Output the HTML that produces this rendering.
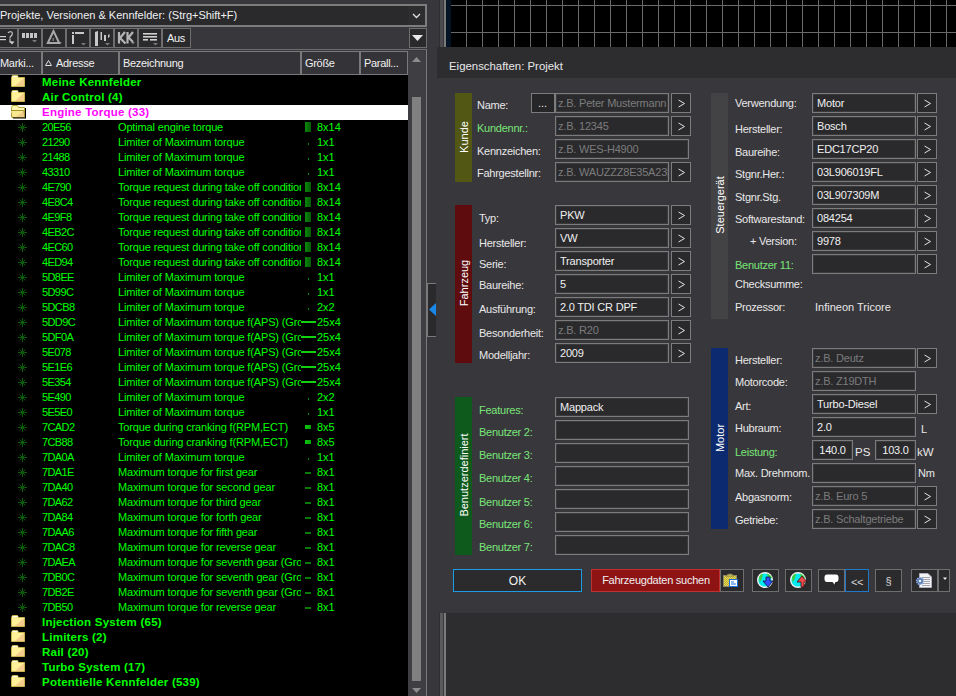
<!DOCTYPE html>
<html><head><meta charset="utf-8">
<style>
*{margin:0;padding:0;box-sizing:border-box}
html,body{width:956px;height:696px;overflow:hidden;background:#38373c;font-family:"Liberation Sans",sans-serif;}
.abs{position:absolute}
#combo{position:absolute;left:-2px;top:4px;width:429px;height:23px;border:2px solid #7c7c7c;background:#2a2a2d;}
#combo .txt{position:absolute;left:0px;top:3px;font-size:11px;color:#f0f0f0;white-space:nowrap;letter-spacing:0px}
#combo .dd{position:absolute;right:0;top:0;width:17px;height:19px;background:#2d2d30}
.tb{position:absolute;top:28px;height:20px;border:1px solid #6e6e6e;background:#2a2a2d}
.hdr{position:absolute;top:51px;height:24px;border:1px solid #7a7a7a;background:#343438;font-size:11px;color:#f0f0f0;white-space:nowrap;overflow:hidden}
.hdr span{position:absolute;left:3px;top:5px;letter-spacing:-0.3px}
#list{position:absolute;left:0;top:75px;width:408px;height:621px;background:#000;overflow:hidden}
.row{position:absolute;left:0;width:408px;height:15px;font-size:11px;color:#00ff00;white-space:nowrap}
.row.hl{background:#fff}
.row.hl .fname{color:#ff00ff}
.ficon{position:absolute;left:11px;top:0px;width:16px;height:15px}
.ficon svg{display:block}
.fname{position:absolute;left:42px;top:0px;font-weight:bold;font-size:11.5px;line-height:15px;color:#00ff00;letter-spacing:0.23px}
.sicon{position:absolute;left:17px;top:2px;width:11px;height:11px}
.sicon svg{display:block}
.addr{position:absolute;left:42px;top:0;line-height:15px;letter-spacing:-0.6px}
.desc{position:absolute;left:118px;top:0;width:183px;overflow:hidden;line-height:15px;letter-spacing:-0.15px}
.size{position:absolute;left:317px;top:0;line-height:15px}
.ind{position:absolute}
.ind.rect{left:305px;top:2px;width:6px;height:10px;background:linear-gradient(90deg,#0a8a0a,#067006 50%,#0b5a0b)}
.ind.rect5{left:305px;top:5px;width:6px;height:4px;background:linear-gradient(90deg,#0ac80a,#08a008)}
.ind.dot{left:308px;top:8px;width:1px;height:2px;background:#0a8a0a}
.ind.line{left:301px;top:6px;width:15px;height:2px;background:#10d010}
.ind.hline{left:305px;top:7px;width:6px;height:2px;background:#0a7a0a}
#sb{position:absolute;left:408px;top:51px;width:18px;height:645px;background:#3f3e43}
#sbline{position:absolute;left:426px;top:49px;width:1px;height:647px;background:#7a7a7a}
#topline{position:absolute;left:0;top:49px;width:427px;height:1px;background:#6e6e6e}
#grid{position:absolute;left:440px;top:0;width:516px;height:47px;background:#000}
#dlg{position:absolute;left:437px;top:47px;width:519px;height:566px;background:#38373c}
#dlgtitle{position:absolute;left:0;top:0;width:519px;height:31px;background:#2d2d30}
#dlgtitle span{position:absolute;left:12px;top:13px;font-size:11.4px;color:#e8e8e8;white-space:nowrap}
#lower{position:absolute;left:446px;top:613px;width:510px;height:83px;background:#2d2d30}
.bar{position:absolute;width:17px}
.bar span{position:absolute;left:50%;top:calc(50% - 1px);transform:translate(-50%,-50%) rotate(-90deg);color:#fff;font-size:11px;white-space:nowrap}
.lbl{position:absolute;font-size:11px;color:#e8e8e8;white-space:nowrap;letter-spacing:-0.25px}
.lbl.g{color:#78e678}
.inp{position:absolute;height:20px;border:1px solid #7c7c7c;box-shadow:inset 0 0 0 1px #3a3a3d;background:#2a2a2d;font-size:11px;color:#f0f0f0;white-space:nowrap;overflow:hidden;letter-spacing:-0.2px}
.inp span{position:absolute;left:4px;top:3px}
.inp.ph span{color:#7c7c7c;left:2px}
.inp[style*="center"] span{position:static;display:block;padding-top:3px}
.btn{position:absolute;height:20px;border:1px solid #7c7c7c;background:#2a2a2d;color:#e0e0e0;font-size:11px;text-align:center;line-height:18px}
.fb{position:absolute;top:569px;height:23px;border:1px solid #6e6e6e;background:#2b2b2e}
</style></head><body>
<!-- left panel -->
<div id="combo"><span class="txt">Projekte, Versionen &amp; Kennfelder: (Strg+Shift+F)</span><div class="dd"><svg width="17" height="19" viewBox="0 0 17 19"><path d="M5 8 L8.5 11.5 L12 8" fill="none" stroke="#e0e0e0" stroke-width="1.3"/></svg></div></div>

<div class="tb" style="left:-6px;width:24px"></div>
<div class="tb" style="left:18px;width:24px"></div>
<div class="tb" style="left:42px;width:24px"></div>
<div class="tb" style="left:66px;width:24px"></div>
<div class="tb" style="left:90px;width:24px"></div>
<div class="tb" style="left:114px;width:24px"></div>
<div class="tb" style="left:138px;width:24px"></div>
<svg width="170" height="20" viewBox="0 0 170 20" style="position:absolute;left:0;top:28px">
 <g fill="#cfcfcf">
  <rect x="0" y="8" width="6" height="1.2"/><rect x="0" y="11" width="6" height="1.2"/>
  <path d="M8 5 Q9 3.5 11 3.8 Q13 4.5 12 7 Q10.5 8.5 10 9.5 V10.5" fill="none" stroke="#cfcfcf" stroke-width="1.1"/>
  <path d="M10 11 V14 H12" fill="none" stroke="#cfcfcf" stroke-width="1.1"/>
  <path d="M9.5 13.5 H14.5 L12 16.5 Z"/>
 </g>
 <g fill="#c4c4c4">
  <rect x="22" y="5" width="3" height="5"/><rect x="26" y="5" width="3" height="5"/><rect x="30" y="5" width="3" height="5"/><rect x="34" y="5" width="3" height="5"/>
 </g>
 <g fill="#7a7a7a">
  <path d="M32 12 H37 L34.5 14.5 Z"/>
  <path d="M57 14 H62 L59.5 16.5 Z"/>
  <path d="M81 15 H86 L83.5 17.5 Z"/>
  <path d="M105 15 H110 L107.5 17.5 Z"/>
  <path d="M131 14 H135 L133 16.5 Z"/>
  <path d="M153 15 H158 L155.5 17.5 Z"/>
 </g>
 <path d="M53.5 3 L47.8 15 H59.2 Z" fill="none" stroke="#a8a8a8" stroke-width="2"/>
 <rect x="52.5" y="10" width="1.5" height="3" fill="#777"/>
 <g fill="#c8c8c8">
  <rect x="72" y="4" width="2" height="2"/><rect x="72" y="7" width="2" height="9"/><rect x="75" y="4" width="9" height="2"/>
  <path d="M95 4 L98 3 V18 H95 Z"/><rect x="100.5" y="4" width="1.5" height="8"/><rect x="104" y="7" width="2" height="6"/><path d="M108 7 L109.5 6 V9 L108 10 Z"/>
 </g>
 <g fill="none" stroke="#b4b4b4" stroke-width="2.2"><path d="M119 4 V15.5 M125 4 L120 10 L125.5 15.5 M127.5 4 V15.5 M133 4 L128.5 9.5 L133 14"/></g>
 <g fill="#d0d0d0">
  <rect x="143" y="5" width="14" height="1.6"/><rect x="143" y="8" width="14" height="1.6"/><rect x="143" y="11" width="5" height="1.6"/><rect x="150" y="11" width="7" height="1.6"/>
 </g>
</svg>
<div class="tb" style="left:162px;width:29px"><span style="position:absolute;left:4px;top:3px;font-size:11px;letter-spacing:-0.4px;color:#f0f0f0">Aus</span></div>
<div class="tb" style="left:409px;width:18px;height:20px"><svg width="16" height="18" viewBox="0 0 16 18" style="position:absolute;left:0;top:0"><path d="M2 6 H13 L7.5 12 Z" fill="#e8e8e8"/></svg></div>
<div id="topline"></div>

<div class="hdr" style="left:-1px;width:43px"><span style="left:0px;letter-spacing:-0.3px">Marki...</span></div>
<div class="hdr" style="left:42px;width:77px"><svg width="8" height="6" style="position:absolute;left:2px;top:8px"><path d="M0.5 5.5 H6.5 L3.5 0.5 Z" fill="none" stroke="#e0e0e0" stroke-width="1"/></svg><span style="left:13px">Adresse</span></div>
<div class="hdr" style="left:119px;width:182px"><span>Bezeichnung</span></div>
<div class="hdr" style="left:301px;width:59px"><span>Größe</span></div>
<div class="hdr" style="left:360px;width:48px"><span>Parall...</span></div>

<div id="list">
</div>
<div style="position:absolute;left:0;top:0">
<div class="row" style="top:75px"><span class="ficon"><svg class="fold" width="16" height="14" viewBox="0 0 16 14"><path d="M0.5 2.5 L1.5 0.5 H6.5 L7.5 2.5 H13.5 V11.5 H0.5 Z" fill="#fff09a" stroke="#c8b44a" stroke-width="1"/><path d="M4 11 L13 3 V11 Z" fill="#f0c088" opacity="0.75"/><rect x="1.5" y="1" width="5" height="1" fill="#ffffff"/></svg></span><span class="fname">Meine Kennfelder</span></div>
<div class="row" style="top:90px"><span class="ficon"><svg class="fold" width="16" height="14" viewBox="0 0 16 14"><path d="M0.5 2.5 L1.5 0.5 H6.5 L7.5 2.5 H13.5 V11.5 H0.5 Z" fill="#fff09a" stroke="#c8b44a" stroke-width="1"/><path d="M4 11 L13 3 V11 Z" fill="#f0c088" opacity="0.75"/><rect x="1.5" y="1" width="5" height="1" fill="#ffffff"/></svg></span><span class="fname">Air Control (4)</span></div>
<div class="row hl" style="top:105px"><span class="ficon"><svg class="fold" width="16" height="14" viewBox="0 0 16 14"><path d="M0.5 12 V2.5 L1.5 0.5 H6.5 L7.5 2.5 H13.5 V12" fill="#fff6b0" stroke="#b8a840" stroke-width="1"/><path d="M-0.5 5.5 H12.5 L14 12.5 H1 Z" fill="#f8e890" stroke="#a09030" stroke-width="1"/><path d="M5 12 L13 6 V12 Z" fill="#f0b888" opacity="0.6"/><path d="M13.5 3 H15 V13.5 H2 V12.5 H14 V3 Z" fill="#000"/></svg></span><span class="fname">Engine Torque (33)</span></div>
<div class="row" style="top:120px"><span class="sicon"><svg class="star" width="11" height="11" viewBox="0 0 11 11"><g stroke="#0a5c0a" stroke-width="1"><line x1="5.5" y1="1" x2="5.5" y2="10"/><line x1="1" y1="5.5" x2="10" y2="5.5"/><line x1="2.6" y1="2.6" x2="8.4" y2="8.4"/><line x1="8.4" y1="2.6" x2="2.6" y2="8.4"/></g><rect x="4" y="4" width="3" height="3" fill="#0a5c0a"/></svg></span><span class="addr">20E56</span><span class="desc">Optimal engine torque</span><span class="ind rect"></span><span class="size">8x14</span></div>
<div class="row" style="top:135px"><span class="sicon"><svg class="star" width="11" height="11" viewBox="0 0 11 11"><g stroke="#0a5c0a" stroke-width="1"><line x1="5.5" y1="1" x2="5.5" y2="10"/><line x1="1" y1="5.5" x2="10" y2="5.5"/><line x1="2.6" y1="2.6" x2="8.4" y2="8.4"/><line x1="8.4" y1="2.6" x2="2.6" y2="8.4"/></g><rect x="4" y="4" width="3" height="3" fill="#0a5c0a"/></svg></span><span class="addr">21290</span><span class="desc">Limiter of Maximum torque</span><span class="ind dot"></span><span class="size">1x1</span></div>
<div class="row" style="top:150px"><span class="sicon"><svg class="star" width="11" height="11" viewBox="0 0 11 11"><g stroke="#0a5c0a" stroke-width="1"><line x1="5.5" y1="1" x2="5.5" y2="10"/><line x1="1" y1="5.5" x2="10" y2="5.5"/><line x1="2.6" y1="2.6" x2="8.4" y2="8.4"/><line x1="8.4" y1="2.6" x2="2.6" y2="8.4"/></g><rect x="4" y="4" width="3" height="3" fill="#0a5c0a"/></svg></span><span class="addr">21488</span><span class="desc">Limiter of Maximum torque</span><span class="ind dot"></span><span class="size">1x1</span></div>
<div class="row" style="top:165px"><span class="sicon"><svg class="star" width="11" height="11" viewBox="0 0 11 11"><g stroke="#0a5c0a" stroke-width="1"><line x1="5.5" y1="1" x2="5.5" y2="10"/><line x1="1" y1="5.5" x2="10" y2="5.5"/><line x1="2.6" y1="2.6" x2="8.4" y2="8.4"/><line x1="8.4" y1="2.6" x2="2.6" y2="8.4"/></g><rect x="4" y="4" width="3" height="3" fill="#0a5c0a"/></svg></span><span class="addr">43310</span><span class="desc">Limiter of Maximum torque</span><span class="ind dot"></span><span class="size">1x1</span></div>
<div class="row" style="top:180px"><span class="sicon"><svg class="star" width="11" height="11" viewBox="0 0 11 11"><g stroke="#0a5c0a" stroke-width="1"><line x1="5.5" y1="1" x2="5.5" y2="10"/><line x1="1" y1="5.5" x2="10" y2="5.5"/><line x1="2.6" y1="2.6" x2="8.4" y2="8.4"/><line x1="8.4" y1="2.6" x2="2.6" y2="8.4"/></g><rect x="4" y="4" width="3" height="3" fill="#0a5c0a"/></svg></span><span class="addr">4E790</span><span class="desc">Torque request during take off conditions</span><span class="ind rect"></span><span class="size">8x14</span></div>
<div class="row" style="top:195px"><span class="sicon"><svg class="star" width="11" height="11" viewBox="0 0 11 11"><g stroke="#0a5c0a" stroke-width="1"><line x1="5.5" y1="1" x2="5.5" y2="10"/><line x1="1" y1="5.5" x2="10" y2="5.5"/><line x1="2.6" y1="2.6" x2="8.4" y2="8.4"/><line x1="8.4" y1="2.6" x2="2.6" y2="8.4"/></g><rect x="4" y="4" width="3" height="3" fill="#0a5c0a"/></svg></span><span class="addr">4E8C4</span><span class="desc">Torque request during take off conditions</span><span class="ind rect"></span><span class="size">8x14</span></div>
<div class="row" style="top:210px"><span class="sicon"><svg class="star" width="11" height="11" viewBox="0 0 11 11"><g stroke="#0a5c0a" stroke-width="1"><line x1="5.5" y1="1" x2="5.5" y2="10"/><line x1="1" y1="5.5" x2="10" y2="5.5"/><line x1="2.6" y1="2.6" x2="8.4" y2="8.4"/><line x1="8.4" y1="2.6" x2="2.6" y2="8.4"/></g><rect x="4" y="4" width="3" height="3" fill="#0a5c0a"/></svg></span><span class="addr">4E9F8</span><span class="desc">Torque request during take off conditions</span><span class="ind rect"></span><span class="size">8x14</span></div>
<div class="row" style="top:225px"><span class="sicon"><svg class="star" width="11" height="11" viewBox="0 0 11 11"><g stroke="#0a5c0a" stroke-width="1"><line x1="5.5" y1="1" x2="5.5" y2="10"/><line x1="1" y1="5.5" x2="10" y2="5.5"/><line x1="2.6" y1="2.6" x2="8.4" y2="8.4"/><line x1="8.4" y1="2.6" x2="2.6" y2="8.4"/></g><rect x="4" y="4" width="3" height="3" fill="#0a5c0a"/></svg></span><span class="addr">4EB2C</span><span class="desc">Torque request during take off conditions</span><span class="ind rect"></span><span class="size">8x14</span></div>
<div class="row" style="top:240px"><span class="sicon"><svg class="star" width="11" height="11" viewBox="0 0 11 11"><g stroke="#0a5c0a" stroke-width="1"><line x1="5.5" y1="1" x2="5.5" y2="10"/><line x1="1" y1="5.5" x2="10" y2="5.5"/><line x1="2.6" y1="2.6" x2="8.4" y2="8.4"/><line x1="8.4" y1="2.6" x2="2.6" y2="8.4"/></g><rect x="4" y="4" width="3" height="3" fill="#0a5c0a"/></svg></span><span class="addr">4EC60</span><span class="desc">Torque request during take off conditions</span><span class="ind rect"></span><span class="size">8x14</span></div>
<div class="row" style="top:255px"><span class="sicon"><svg class="star" width="11" height="11" viewBox="0 0 11 11"><g stroke="#0a5c0a" stroke-width="1"><line x1="5.5" y1="1" x2="5.5" y2="10"/><line x1="1" y1="5.5" x2="10" y2="5.5"/><line x1="2.6" y1="2.6" x2="8.4" y2="8.4"/><line x1="8.4" y1="2.6" x2="2.6" y2="8.4"/></g><rect x="4" y="4" width="3" height="3" fill="#0a5c0a"/></svg></span><span class="addr">4ED94</span><span class="desc">Torque request during take off conditions</span><span class="ind rect"></span><span class="size">8x14</span></div>
<div class="row" style="top:270px"><span class="sicon"><svg class="star" width="11" height="11" viewBox="0 0 11 11"><g stroke="#0a5c0a" stroke-width="1"><line x1="5.5" y1="1" x2="5.5" y2="10"/><line x1="1" y1="5.5" x2="10" y2="5.5"/><line x1="2.6" y1="2.6" x2="8.4" y2="8.4"/><line x1="8.4" y1="2.6" x2="2.6" y2="8.4"/></g><rect x="4" y="4" width="3" height="3" fill="#0a5c0a"/></svg></span><span class="addr">5D8EE</span><span class="desc">Limiter of Maximum torque</span><span class="ind dot"></span><span class="size">1x1</span></div>
<div class="row" style="top:285px"><span class="sicon"><svg class="star" width="11" height="11" viewBox="0 0 11 11"><g stroke="#0a5c0a" stroke-width="1"><line x1="5.5" y1="1" x2="5.5" y2="10"/><line x1="1" y1="5.5" x2="10" y2="5.5"/><line x1="2.6" y1="2.6" x2="8.4" y2="8.4"/><line x1="8.4" y1="2.6" x2="2.6" y2="8.4"/></g><rect x="4" y="4" width="3" height="3" fill="#0a5c0a"/></svg></span><span class="addr">5D99C</span><span class="desc">Limiter of Maximum torque</span><span class="ind dot"></span><span class="size">1x1</span></div>
<div class="row" style="top:300px"><span class="sicon"><svg class="star" width="11" height="11" viewBox="0 0 11 11"><g stroke="#0a5c0a" stroke-width="1"><line x1="5.5" y1="1" x2="5.5" y2="10"/><line x1="1" y1="5.5" x2="10" y2="5.5"/><line x1="2.6" y1="2.6" x2="8.4" y2="8.4"/><line x1="8.4" y1="2.6" x2="2.6" y2="8.4"/></g><rect x="4" y="4" width="3" height="3" fill="#0a5c0a"/></svg></span><span class="addr">5DCB8</span><span class="desc">Limiter of Maximum torque</span><span class="ind dot"></span><span class="size">2x2</span></div>
<div class="row" style="top:315px"><span class="sicon"><svg class="star" width="11" height="11" viewBox="0 0 11 11"><g stroke="#0a5c0a" stroke-width="1"><line x1="5.5" y1="1" x2="5.5" y2="10"/><line x1="1" y1="5.5" x2="10" y2="5.5"/><line x1="2.6" y1="2.6" x2="8.4" y2="8.4"/><line x1="8.4" y1="2.6" x2="2.6" y2="8.4"/></g><rect x="4" y="4" width="3" height="3" fill="#0a5c0a"/></svg></span><span class="addr">5DD9C</span><span class="desc">Limiter of Maximum torque f(APS) (Gro</span><span class="ind line"></span><span class="size">25x4</span></div>
<div class="row" style="top:330px"><span class="sicon"><svg class="star" width="11" height="11" viewBox="0 0 11 11"><g stroke="#0a5c0a" stroke-width="1"><line x1="5.5" y1="1" x2="5.5" y2="10"/><line x1="1" y1="5.5" x2="10" y2="5.5"/><line x1="2.6" y1="2.6" x2="8.4" y2="8.4"/><line x1="8.4" y1="2.6" x2="2.6" y2="8.4"/></g><rect x="4" y="4" width="3" height="3" fill="#0a5c0a"/></svg></span><span class="addr">5DF0A</span><span class="desc">Limiter of Maximum torque f(APS) (Gro</span><span class="ind line"></span><span class="size">25x4</span></div>
<div class="row" style="top:345px"><span class="sicon"><svg class="star" width="11" height="11" viewBox="0 0 11 11"><g stroke="#0a5c0a" stroke-width="1"><line x1="5.5" y1="1" x2="5.5" y2="10"/><line x1="1" y1="5.5" x2="10" y2="5.5"/><line x1="2.6" y1="2.6" x2="8.4" y2="8.4"/><line x1="8.4" y1="2.6" x2="2.6" y2="8.4"/></g><rect x="4" y="4" width="3" height="3" fill="#0a5c0a"/></svg></span><span class="addr">5E078</span><span class="desc">Limiter of Maximum torque f(APS) (Gro</span><span class="ind line"></span><span class="size">25x4</span></div>
<div class="row" style="top:360px"><span class="sicon"><svg class="star" width="11" height="11" viewBox="0 0 11 11"><g stroke="#0a5c0a" stroke-width="1"><line x1="5.5" y1="1" x2="5.5" y2="10"/><line x1="1" y1="5.5" x2="10" y2="5.5"/><line x1="2.6" y1="2.6" x2="8.4" y2="8.4"/><line x1="8.4" y1="2.6" x2="2.6" y2="8.4"/></g><rect x="4" y="4" width="3" height="3" fill="#0a5c0a"/></svg></span><span class="addr">5E1E6</span><span class="desc">Limiter of Maximum torque f(APS) (Gro</span><span class="ind line"></span><span class="size">25x4</span></div>
<div class="row" style="top:375px"><span class="sicon"><svg class="star" width="11" height="11" viewBox="0 0 11 11"><g stroke="#0a5c0a" stroke-width="1"><line x1="5.5" y1="1" x2="5.5" y2="10"/><line x1="1" y1="5.5" x2="10" y2="5.5"/><line x1="2.6" y1="2.6" x2="8.4" y2="8.4"/><line x1="8.4" y1="2.6" x2="2.6" y2="8.4"/></g><rect x="4" y="4" width="3" height="3" fill="#0a5c0a"/></svg></span><span class="addr">5E354</span><span class="desc">Limiter of Maximum torque f(APS) (Gro</span><span class="ind line"></span><span class="size">25x4</span></div>
<div class="row" style="top:390px"><span class="sicon"><svg class="star" width="11" height="11" viewBox="0 0 11 11"><g stroke="#0a5c0a" stroke-width="1"><line x1="5.5" y1="1" x2="5.5" y2="10"/><line x1="1" y1="5.5" x2="10" y2="5.5"/><line x1="2.6" y1="2.6" x2="8.4" y2="8.4"/><line x1="8.4" y1="2.6" x2="2.6" y2="8.4"/></g><rect x="4" y="4" width="3" height="3" fill="#0a5c0a"/></svg></span><span class="addr">5E490</span><span class="desc">Limiter of Maximum torque</span><span class="ind dot"></span><span class="size">2x2</span></div>
<div class="row" style="top:405px"><span class="sicon"><svg class="star" width="11" height="11" viewBox="0 0 11 11"><g stroke="#0a5c0a" stroke-width="1"><line x1="5.5" y1="1" x2="5.5" y2="10"/><line x1="1" y1="5.5" x2="10" y2="5.5"/><line x1="2.6" y1="2.6" x2="8.4" y2="8.4"/><line x1="8.4" y1="2.6" x2="2.6" y2="8.4"/></g><rect x="4" y="4" width="3" height="3" fill="#0a5c0a"/></svg></span><span class="addr">5E5E0</span><span class="desc">Limiter of Maximum torque</span><span class="ind dot"></span><span class="size">1x1</span></div>
<div class="row" style="top:420px"><span class="sicon"><svg class="star" width="11" height="11" viewBox="0 0 11 11"><g stroke="#0a5c0a" stroke-width="1"><line x1="5.5" y1="1" x2="5.5" y2="10"/><line x1="1" y1="5.5" x2="10" y2="5.5"/><line x1="2.6" y1="2.6" x2="8.4" y2="8.4"/><line x1="8.4" y1="2.6" x2="2.6" y2="8.4"/></g><rect x="4" y="4" width="3" height="3" fill="#0a5c0a"/></svg></span><span class="addr">7CAD2</span><span class="desc">Torque during cranking f(RPM,ECT)</span><span class="ind rect5"></span><span class="size">8x5</span></div>
<div class="row" style="top:435px"><span class="sicon"><svg class="star" width="11" height="11" viewBox="0 0 11 11"><g stroke="#0a5c0a" stroke-width="1"><line x1="5.5" y1="1" x2="5.5" y2="10"/><line x1="1" y1="5.5" x2="10" y2="5.5"/><line x1="2.6" y1="2.6" x2="8.4" y2="8.4"/><line x1="8.4" y1="2.6" x2="2.6" y2="8.4"/></g><rect x="4" y="4" width="3" height="3" fill="#0a5c0a"/></svg></span><span class="addr">7CB88</span><span class="desc">Torque during cranking f(RPM,ECT)</span><span class="ind rect5"></span><span class="size">8x5</span></div>
<div class="row" style="top:450px"><span class="sicon"><svg class="star" width="11" height="11" viewBox="0 0 11 11"><g stroke="#0a5c0a" stroke-width="1"><line x1="5.5" y1="1" x2="5.5" y2="10"/><line x1="1" y1="5.5" x2="10" y2="5.5"/><line x1="2.6" y1="2.6" x2="8.4" y2="8.4"/><line x1="8.4" y1="2.6" x2="2.6" y2="8.4"/></g><rect x="4" y="4" width="3" height="3" fill="#0a5c0a"/></svg></span><span class="addr">7DA0A</span><span class="desc">Limiter of Maximum torque</span><span class="ind dot"></span><span class="size">1x1</span></div>
<div class="row" style="top:465px"><span class="sicon"><svg class="star" width="11" height="11" viewBox="0 0 11 11"><g stroke="#0a5c0a" stroke-width="1"><line x1="5.5" y1="1" x2="5.5" y2="10"/><line x1="1" y1="5.5" x2="10" y2="5.5"/><line x1="2.6" y1="2.6" x2="8.4" y2="8.4"/><line x1="8.4" y1="2.6" x2="2.6" y2="8.4"/></g><rect x="4" y="4" width="3" height="3" fill="#0a5c0a"/></svg></span><span class="addr">7DA1E</span><span class="desc">Maximum torque for first gear</span><span class="ind hline"></span><span class="size">8x1</span></div>
<div class="row" style="top:480px"><span class="sicon"><svg class="star" width="11" height="11" viewBox="0 0 11 11"><g stroke="#0a5c0a" stroke-width="1"><line x1="5.5" y1="1" x2="5.5" y2="10"/><line x1="1" y1="5.5" x2="10" y2="5.5"/><line x1="2.6" y1="2.6" x2="8.4" y2="8.4"/><line x1="8.4" y1="2.6" x2="2.6" y2="8.4"/></g><rect x="4" y="4" width="3" height="3" fill="#0a5c0a"/></svg></span><span class="addr">7DA40</span><span class="desc">Maximum torque for second gear</span><span class="ind hline"></span><span class="size">8x1</span></div>
<div class="row" style="top:495px"><span class="sicon"><svg class="star" width="11" height="11" viewBox="0 0 11 11"><g stroke="#0a5c0a" stroke-width="1"><line x1="5.5" y1="1" x2="5.5" y2="10"/><line x1="1" y1="5.5" x2="10" y2="5.5"/><line x1="2.6" y1="2.6" x2="8.4" y2="8.4"/><line x1="8.4" y1="2.6" x2="2.6" y2="8.4"/></g><rect x="4" y="4" width="3" height="3" fill="#0a5c0a"/></svg></span><span class="addr">7DA62</span><span class="desc">Maximum torque for third gear</span><span class="ind hline"></span><span class="size">8x1</span></div>
<div class="row" style="top:510px"><span class="sicon"><svg class="star" width="11" height="11" viewBox="0 0 11 11"><g stroke="#0a5c0a" stroke-width="1"><line x1="5.5" y1="1" x2="5.5" y2="10"/><line x1="1" y1="5.5" x2="10" y2="5.5"/><line x1="2.6" y1="2.6" x2="8.4" y2="8.4"/><line x1="8.4" y1="2.6" x2="2.6" y2="8.4"/></g><rect x="4" y="4" width="3" height="3" fill="#0a5c0a"/></svg></span><span class="addr">7DA84</span><span class="desc">Maximum torque for forth gear</span><span class="ind hline"></span><span class="size">8x1</span></div>
<div class="row" style="top:525px"><span class="sicon"><svg class="star" width="11" height="11" viewBox="0 0 11 11"><g stroke="#0a5c0a" stroke-width="1"><line x1="5.5" y1="1" x2="5.5" y2="10"/><line x1="1" y1="5.5" x2="10" y2="5.5"/><line x1="2.6" y1="2.6" x2="8.4" y2="8.4"/><line x1="8.4" y1="2.6" x2="2.6" y2="8.4"/></g><rect x="4" y="4" width="3" height="3" fill="#0a5c0a"/></svg></span><span class="addr">7DAA6</span><span class="desc">Maximum torque for fifth gear</span><span class="ind hline"></span><span class="size">8x1</span></div>
<div class="row" style="top:540px"><span class="sicon"><svg class="star" width="11" height="11" viewBox="0 0 11 11"><g stroke="#0a5c0a" stroke-width="1"><line x1="5.5" y1="1" x2="5.5" y2="10"/><line x1="1" y1="5.5" x2="10" y2="5.5"/><line x1="2.6" y1="2.6" x2="8.4" y2="8.4"/><line x1="8.4" y1="2.6" x2="2.6" y2="8.4"/></g><rect x="4" y="4" width="3" height="3" fill="#0a5c0a"/></svg></span><span class="addr">7DAC8</span><span class="desc">Maximum torque for reverse gear</span><span class="ind hline"></span><span class="size">8x1</span></div>
<div class="row" style="top:555px"><span class="sicon"><svg class="star" width="11" height="11" viewBox="0 0 11 11"><g stroke="#0a5c0a" stroke-width="1"><line x1="5.5" y1="1" x2="5.5" y2="10"/><line x1="1" y1="5.5" x2="10" y2="5.5"/><line x1="2.6" y1="2.6" x2="8.4" y2="8.4"/><line x1="8.4" y1="2.6" x2="2.6" y2="8.4"/></g><rect x="4" y="4" width="3" height="3" fill="#0a5c0a"/></svg></span><span class="addr">7DAEA</span><span class="desc">Maximum torque for seventh gear (Gro</span><span class="ind hline"></span><span class="size">8x1</span></div>
<div class="row" style="top:570px"><span class="sicon"><svg class="star" width="11" height="11" viewBox="0 0 11 11"><g stroke="#0a5c0a" stroke-width="1"><line x1="5.5" y1="1" x2="5.5" y2="10"/><line x1="1" y1="5.5" x2="10" y2="5.5"/><line x1="2.6" y1="2.6" x2="8.4" y2="8.4"/><line x1="8.4" y1="2.6" x2="2.6" y2="8.4"/></g><rect x="4" y="4" width="3" height="3" fill="#0a5c0a"/></svg></span><span class="addr">7DB0C</span><span class="desc">Maximum torque for seventh gear (Gro</span><span class="ind hline"></span><span class="size">8x1</span></div>
<div class="row" style="top:585px"><span class="sicon"><svg class="star" width="11" height="11" viewBox="0 0 11 11"><g stroke="#0a5c0a" stroke-width="1"><line x1="5.5" y1="1" x2="5.5" y2="10"/><line x1="1" y1="5.5" x2="10" y2="5.5"/><line x1="2.6" y1="2.6" x2="8.4" y2="8.4"/><line x1="8.4" y1="2.6" x2="2.6" y2="8.4"/></g><rect x="4" y="4" width="3" height="3" fill="#0a5c0a"/></svg></span><span class="addr">7DB2E</span><span class="desc">Maximum torque for seventh gear (Gro</span><span class="ind hline"></span><span class="size">8x1</span></div>
<div class="row" style="top:600px"><span class="sicon"><svg class="star" width="11" height="11" viewBox="0 0 11 11"><g stroke="#0a5c0a" stroke-width="1"><line x1="5.5" y1="1" x2="5.5" y2="10"/><line x1="1" y1="5.5" x2="10" y2="5.5"/><line x1="2.6" y1="2.6" x2="8.4" y2="8.4"/><line x1="8.4" y1="2.6" x2="2.6" y2="8.4"/></g><rect x="4" y="4" width="3" height="3" fill="#0a5c0a"/></svg></span><span class="addr">7DB50</span><span class="desc">Maximum torque for reverse gear</span><span class="ind hline"></span><span class="size">8x1</span></div>
<div class="row" style="top:615px"><span class="ficon"><svg class="fold" width="16" height="14" viewBox="0 0 16 14"><path d="M0.5 2.5 L1.5 0.5 H6.5 L7.5 2.5 H13.5 V11.5 H0.5 Z" fill="#fff09a" stroke="#c8b44a" stroke-width="1"/><path d="M4 11 L13 3 V11 Z" fill="#f0c088" opacity="0.75"/><rect x="1.5" y="1" width="5" height="1" fill="#ffffff"/></svg></span><span class="fname">Injection System (65)</span></div>
<div class="row" style="top:630px"><span class="ficon"><svg class="fold" width="16" height="14" viewBox="0 0 16 14"><path d="M0.5 2.5 L1.5 0.5 H6.5 L7.5 2.5 H13.5 V11.5 H0.5 Z" fill="#fff09a" stroke="#c8b44a" stroke-width="1"/><path d="M4 11 L13 3 V11 Z" fill="#f0c088" opacity="0.75"/><rect x="1.5" y="1" width="5" height="1" fill="#ffffff"/></svg></span><span class="fname">Limiters (2)</span></div>
<div class="row" style="top:645px"><span class="ficon"><svg class="fold" width="16" height="14" viewBox="0 0 16 14"><path d="M0.5 2.5 L1.5 0.5 H6.5 L7.5 2.5 H13.5 V11.5 H0.5 Z" fill="#fff09a" stroke="#c8b44a" stroke-width="1"/><path d="M4 11 L13 3 V11 Z" fill="#f0c088" opacity="0.75"/><rect x="1.5" y="1" width="5" height="1" fill="#ffffff"/></svg></span><span class="fname">Rail (20)</span></div>
<div class="row" style="top:660px"><span class="ficon"><svg class="fold" width="16" height="14" viewBox="0 0 16 14"><path d="M0.5 2.5 L1.5 0.5 H6.5 L7.5 2.5 H13.5 V11.5 H0.5 Z" fill="#fff09a" stroke="#c8b44a" stroke-width="1"/><path d="M4 11 L13 3 V11 Z" fill="#f0c088" opacity="0.75"/><rect x="1.5" y="1" width="5" height="1" fill="#ffffff"/></svg></span><span class="fname">Turbo System (17)</span></div>
<div class="row" style="top:675px"><span class="ficon"><svg class="fold" width="16" height="14" viewBox="0 0 16 14"><path d="M0.5 2.5 L1.5 0.5 H6.5 L7.5 2.5 H13.5 V11.5 H0.5 Z" fill="#fff09a" stroke="#c8b44a" stroke-width="1"/><path d="M4 11 L13 3 V11 Z" fill="#f0c088" opacity="0.75"/><rect x="1.5" y="1" width="5" height="1" fill="#ffffff"/></svg></span><span class="fname">Potentielle Kennfelder (539)</span></div>
</div>
<div id="sb">
  <svg width="18" height="16" style="position:absolute;left:0;top:0px"><path d="M4 11 H13 L8.5 6 Z" fill="#8c8c8c"/></svg>
  <div style="position:absolute;left:4px;top:46px;width:9px;height:584px;background:#808080"></div>
  <svg width="18" height="16" style="position:absolute;left:0;top:631px"><path d="M4 6 H13 L8.5 11 Z" fill="#8c8c8c"/></svg>
</div>
<div id="sbline"></div>

<!-- splitter tab -->
<div style="position:absolute;left:427px;top:283px;width:9px;height:54px;background:#2a2a2d;border-top:1px solid #7a7a7a;border-bottom:1px solid #7a7a7a;border-left:1px solid #7a7a7a"></div>
<svg width="10" height="16" style="position:absolute;left:428px;top:302px"><path d="M1 7.5 L8 1 V14 Z" fill="#1a88e8"/></svg>

<!-- grid -->
<div id="grid"></div>
<div style="position:absolute;left:439px;top:0;width:1px;height:47px;background:#2e2e31"></div>
<div style="position:absolute;left:440px;top:0;width:3px;height:47px;background:#4c4c50"></div>
<div style="position:absolute;left:443px;top:0;width:1px;height:47px;background:#3a3a3d"></div>
<div style="position:absolute;left:444px;top:0;width:2px;height:47px;background:#7a7a7a"></div>
<div style="position:absolute;left:446px;top:0;width:5px;height:47px;background:#041424"></div>
<div style="position:absolute;left:466px;top:0;width:1px;height:47px;background:#6a6a6a"></div>
<div style="position:absolute;left:482px;top:0;width:1px;height:47px;background:#6a6a6a"></div>
<div style="position:absolute;left:498px;top:0;width:1px;height:47px;background:#6a6a6a"></div>
<div style="position:absolute;left:514px;top:0;width:1px;height:47px;background:#6a6a6a"></div>
<div style="position:absolute;left:530px;top:0;width:1px;height:47px;background:#6a6a6a"></div>
<div style="position:absolute;left:546px;top:0;width:1px;height:47px;background:#6a6a6a"></div>
<div style="position:absolute;left:562px;top:0;width:1px;height:47px;background:#6a6a6a"></div>
<div style="position:absolute;left:578px;top:0;width:1px;height:47px;background:#6a6a6a"></div>
<div style="position:absolute;left:594px;top:0;width:1px;height:47px;background:#6a6a6a"></div>
<div style="position:absolute;left:610px;top:0;width:1px;height:47px;background:#6a6a6a"></div>
<div style="position:absolute;left:626px;top:0;width:1px;height:47px;background:#6a6a6a"></div>
<div style="position:absolute;left:642px;top:0;width:1px;height:47px;background:#6a6a6a"></div>
<div style="position:absolute;left:658px;top:0;width:1px;height:47px;background:#6a6a6a"></div>
<div style="position:absolute;left:674px;top:0;width:1px;height:47px;background:#6a6a6a"></div>
<div style="position:absolute;left:690px;top:0;width:1px;height:47px;background:#6a6a6a"></div>
<div style="position:absolute;left:706px;top:0;width:1px;height:47px;background:#6a6a6a"></div>
<div style="position:absolute;left:722px;top:0;width:1px;height:47px;background:#6a6a6a"></div>
<div style="position:absolute;left:738px;top:0;width:1px;height:47px;background:#6a6a6a"></div>
<div style="position:absolute;left:754px;top:0;width:1px;height:47px;background:#6a6a6a"></div>
<div style="position:absolute;left:770px;top:0;width:1px;height:47px;background:#6a6a6a"></div>
<div style="position:absolute;left:786px;top:0;width:1px;height:47px;background:#6a6a6a"></div>
<div style="position:absolute;left:802px;top:0;width:1px;height:47px;background:#6a6a6a"></div>
<div style="position:absolute;left:818px;top:0;width:1px;height:47px;background:#6a6a6a"></div>
<div style="position:absolute;left:834px;top:0;width:1px;height:47px;background:#6a6a6a"></div>
<div style="position:absolute;left:850px;top:0;width:1px;height:47px;background:#6a6a6a"></div>
<div style="position:absolute;left:866px;top:0;width:1px;height:47px;background:#6a6a6a"></div>
<div style="position:absolute;left:882px;top:0;width:1px;height:47px;background:#6a6a6a"></div>
<div style="position:absolute;left:898px;top:0;width:1px;height:47px;background:#6a6a6a"></div>
<div style="position:absolute;left:914px;top:0;width:1px;height:47px;background:#6a6a6a"></div>
<div style="position:absolute;left:930px;top:0;width:1px;height:47px;background:#6a6a6a"></div>
<div style="position:absolute;left:946px;top:0;width:1px;height:47px;background:#6a6a6a"></div>
<div style="position:absolute;left:451px;top:5px;width:505px;height:1px;background:#6a6a6a"></div>
<div style="position:absolute;left:451px;top:32px;width:505px;height:1px;background:#6a6a6a"></div>

<!-- lower area -->
<div id="lower"></div>
<div style="position:absolute;left:439px;top:613px;width:1px;height:83px;background:#2e2e31"></div>
<div style="position:absolute;left:440px;top:613px;width:3px;height:83px;background:#5a5a5c"></div>
<div style="position:absolute;left:443px;top:613px;width:1px;height:83px;background:#3a3a3d"></div>
<div style="position:absolute;left:444px;top:613px;width:2px;height:83px;background:#7a7a7a"></div>

<!-- dialog -->
<div id="dlg"><div id="dlgtitle"><span>Eigenschaften: Projekt</span></div></div>
<div class="bar" style="left:455px;top:93px;height:89px;background:#525814"><span>Kunde</span></div>
<div class="lbl" style="left:477px;top:99px;">Name:</div>
<div class="btn" style="left:531px;top:93px;width:24px;height:20px;background:#262629"><span style="position:absolute;left:6px;top:0px;font-size:11px">...</span></div>
<div class="inp ph" style="left:555px;top:93px;width:114px;height:20px;"><span>z.B. Peter Mustermann</span></div>
<div class="btn" style="left:671px;top:93px;width:20px;height:20px"><svg width="18" height="18" style="position:absolute;left:0;top:0"><path d="M6.5 6.0 L12.5 9.5 L6.5 13.0" fill="none" stroke="#e0e0e0" stroke-width="1"/></svg></div>
<div class="lbl g" style="left:477px;top:122px;">Kundennr.:</div>
<div class="inp ph" style="left:555px;top:116px;width:114px;height:20px;"><span>z.B. 12345</span></div>
<div class="btn" style="left:671px;top:116px;width:20px;height:20px"><svg width="18" height="18" style="position:absolute;left:0;top:0"><path d="M6.5 6.0 L12.5 9.5 L6.5 13.0" fill="none" stroke="#e0e0e0" stroke-width="1"/></svg></div>
<div class="lbl" style="left:477px;top:145px;">Kennzeichen:</div>
<div class="inp ph" style="left:555px;top:139px;width:134px;height:20px;"><span>z.B. WES-H4900</span></div>
<div class="lbl" style="left:477px;top:167px;">Fahrgestellnr:</div>
<div class="inp ph" style="left:555px;top:162px;width:114px;height:20px;"><span>z.B. WAUZZZ8E35A235</span></div>
<div class="btn" style="left:671px;top:162px;width:20px;height:20px"><svg width="18" height="18" style="position:absolute;left:0;top:0"><path d="M6.5 6.0 L12.5 9.5 L6.5 13.0" fill="none" stroke="#e0e0e0" stroke-width="1"/></svg></div>
<div class="bar" style="left:455px;top:205px;height:158px;background:#5e0c0e"><span>Fahrzeug</span></div>
<div class="lbl" style="left:479px;top:212px;">Typ:</div>
<div class="inp" style="left:555px;top:205px;width:114px;height:20px;"><span>PKW</span></div>
<div class="btn" style="left:671px;top:205px;width:20px;height:20px"><svg width="18" height="18" style="position:absolute;left:0;top:0"><path d="M6.5 6.0 L12.5 9.5 L6.5 13.0" fill="none" stroke="#e0e0e0" stroke-width="1"/></svg></div>
<div class="lbl" style="left:479px;top:237px;">Hersteller:</div>
<div class="inp" style="left:555px;top:228px;width:114px;height:20px;"><span>VW</span></div>
<div class="btn" style="left:671px;top:228px;width:20px;height:20px"><svg width="18" height="18" style="position:absolute;left:0;top:0"><path d="M6.5 6.0 L12.5 9.5 L6.5 13.0" fill="none" stroke="#e0e0e0" stroke-width="1"/></svg></div>
<div class="lbl" style="left:479px;top:258px;">Serie:</div>
<div class="inp" style="left:555px;top:251px;width:114px;height:20px;"><span>Transporter</span></div>
<div class="btn" style="left:671px;top:251px;width:20px;height:20px"><svg width="18" height="18" style="position:absolute;left:0;top:0"><path d="M6.5 6.0 L12.5 9.5 L6.5 13.0" fill="none" stroke="#e0e0e0" stroke-width="1"/></svg></div>
<div class="lbl" style="left:479px;top:279px;">Baureihe:</div>
<div class="inp" style="left:555px;top:274px;width:114px;height:20px;"><span>5</span></div>
<div class="btn" style="left:671px;top:274px;width:20px;height:20px"><svg width="18" height="18" style="position:absolute;left:0;top:0"><path d="M6.5 6.0 L12.5 9.5 L6.5 13.0" fill="none" stroke="#e0e0e0" stroke-width="1"/></svg></div>
<div class="lbl" style="left:479px;top:303px;">Ausführung:</div>
<div class="inp" style="left:555px;top:297px;width:114px;height:20px;"><span>2.0 TDI CR DPF</span></div>
<div class="btn" style="left:671px;top:297px;width:20px;height:20px"><svg width="18" height="18" style="position:absolute;left:0;top:0"><path d="M6.5 6.0 L12.5 9.5 L6.5 13.0" fill="none" stroke="#e0e0e0" stroke-width="1"/></svg></div>
<div class="lbl" style="left:479px;top:327px;">Besonderheit:</div>
<div class="inp ph" style="left:555px;top:320px;width:114px;height:20px;"><span>z.B. R20</span></div>
<div class="btn" style="left:671px;top:320px;width:20px;height:20px"><svg width="18" height="18" style="position:absolute;left:0;top:0"><path d="M6.5 6.0 L12.5 9.5 L6.5 13.0" fill="none" stroke="#e0e0e0" stroke-width="1"/></svg></div>
<div class="lbl" style="left:479px;top:349px;">Modelljahr:</div>
<div class="inp" style="left:555px;top:343px;width:114px;height:20px;"><span>2009</span></div>
<div class="btn" style="left:671px;top:343px;width:20px;height:20px"><svg width="18" height="18" style="position:absolute;left:0;top:0"><path d="M6.5 6.0 L12.5 9.5 L6.5 13.0" fill="none" stroke="#e0e0e0" stroke-width="1"/></svg></div>
<div class="bar" style="left:455px;top:397px;height:158px;background:#0e5a1c"><span>Benutzerdefiniert</span></div>
<div class="lbl g" style="left:479px;top:404px;">Features:</div>
<div class="inp" style="left:555px;top:397px;width:134px;height:20px;"><span>Mappack</span></div>
<div class="lbl g" style="left:479px;top:426px;">Benutzer 2:</div>
<div class="inp" style="left:555px;top:420px;width:134px;height:20px;"></div>
<div class="lbl g" style="left:479px;top:449px;">Benutzer 3:</div>
<div class="inp" style="left:555px;top:443px;width:134px;height:20px;"></div>
<div class="lbl g" style="left:479px;top:472px;">Benutzer 4:</div>
<div class="inp" style="left:555px;top:466px;width:134px;height:20px;"></div>
<div class="lbl g" style="left:479px;top:496px;">Benutzer 5:</div>
<div class="inp" style="left:555px;top:489px;width:134px;height:20px;"></div>
<div class="lbl g" style="left:479px;top:518px;">Benutzer 6:</div>
<div class="inp" style="left:555px;top:512px;width:134px;height:20px;"></div>
<div class="lbl g" style="left:479px;top:541px;">Benutzer 7:</div>
<div class="inp" style="left:555px;top:535px;width:134px;height:20px;"></div>
<div class="bar" style="left:711px;top:93px;height:226px;background:#434346"><span>Steuergerät</span></div>
<div class="lbl" style="left:735px;top:97px;">Verwendung:</div>
<div class="inp" style="left:812px;top:93px;width:104px;height:20px;"><span>Motor</span></div>
<div class="btn" style="left:917px;top:93px;width:20px;height:20px"><svg width="18" height="18" style="position:absolute;left:0;top:0"><path d="M6.5 6.0 L12.5 9.5 L6.5 13.0" fill="none" stroke="#e0e0e0" stroke-width="1"/></svg></div>
<div class="lbl" style="left:735px;top:123px;">Hersteller:</div>
<div class="inp" style="left:812px;top:116px;width:104px;height:20px;"><span>Bosch</span></div>
<div class="btn" style="left:917px;top:116px;width:20px;height:20px"><svg width="18" height="18" style="position:absolute;left:0;top:0"><path d="M6.5 6.0 L12.5 9.5 L6.5 13.0" fill="none" stroke="#e0e0e0" stroke-width="1"/></svg></div>
<div class="lbl" style="left:735px;top:146px;">Baureihe:</div>
<div class="inp" style="left:812px;top:139px;width:104px;height:20px;"><span>EDC17CP20</span></div>
<div class="btn" style="left:917px;top:139px;width:20px;height:20px"><svg width="18" height="18" style="position:absolute;left:0;top:0"><path d="M6.5 6.0 L12.5 9.5 L6.5 13.0" fill="none" stroke="#e0e0e0" stroke-width="1"/></svg></div>
<div class="lbl" style="left:735px;top:168px;">Stgnr.Her.:</div>
<div class="inp" style="left:812px;top:162px;width:104px;height:20px;"><span>03L906019FL</span></div>
<div class="btn" style="left:917px;top:162px;width:20px;height:20px"><svg width="18" height="18" style="position:absolute;left:0;top:0"><path d="M6.5 6.0 L12.5 9.5 L6.5 13.0" fill="none" stroke="#e0e0e0" stroke-width="1"/></svg></div>
<div class="lbl" style="left:735px;top:191px;">Stgnr.Stg.</div>
<div class="inp" style="left:812px;top:185px;width:104px;height:20px;"><span>03L907309M</span></div>
<div class="btn" style="left:917px;top:185px;width:20px;height:20px"><svg width="18" height="18" style="position:absolute;left:0;top:0"><path d="M6.5 6.0 L12.5 9.5 L6.5 13.0" fill="none" stroke="#e0e0e0" stroke-width="1"/></svg></div>
<div class="lbl" style="left:735px;top:213px;">Softwarestand:</div>
<div class="inp" style="left:812px;top:208px;width:104px;height:20px;"><span>084254</span></div>
<div class="btn" style="left:917px;top:208px;width:20px;height:20px"><svg width="18" height="18" style="position:absolute;left:0;top:0"><path d="M6.5 6.0 L12.5 9.5 L6.5 13.0" fill="none" stroke="#e0e0e0" stroke-width="1"/></svg></div>
<div class="lbl" style="left:750px;top:235px;">+ Version:</div>
<div class="inp" style="left:812px;top:231px;width:104px;height:20px;"><span>9978</span></div>
<div class="btn" style="left:917px;top:231px;width:20px;height:20px"><svg width="18" height="18" style="position:absolute;left:0;top:0"><path d="M6.5 6.0 L12.5 9.5 L6.5 13.0" fill="none" stroke="#e0e0e0" stroke-width="1"/></svg></div>
<div class="lbl g" style="left:735px;top:259px;">Benutzer 11:</div>
<div class="inp" style="left:812px;top:254px;width:104px;height:20px;"></div>
<div class="btn" style="left:917px;top:254px;width:20px;height:20px"><svg width="18" height="18" style="position:absolute;left:0;top:0"><path d="M6.5 6.0 L12.5 9.5 L6.5 13.0" fill="none" stroke="#e0e0e0" stroke-width="1"/></svg></div>
<div class="lbl" style="left:735px;top:278px;">Checksumme:</div>
<div class="lbl" style="left:735px;top:301px;">Prozessor:</div>
<div class="lbl" style="left:815px;top:301px;letter-spacing:0">Infineon Tricore</div>
<div class="bar" style="left:711px;top:348px;height:181px;background:#0c2a70"><span>Motor</span></div>
<div class="lbl" style="left:735px;top:354px;">Hersteller:</div>
<div class="inp ph" style="left:812px;top:348px;width:104px;height:20px;"><span>z.B. Deutz</span></div>
<div class="btn" style="left:917px;top:348px;width:20px;height:20px"><svg width="18" height="18" style="position:absolute;left:0;top:0"><path d="M6.5 6.0 L12.5 9.5 L6.5 13.0" fill="none" stroke="#e0e0e0" stroke-width="1"/></svg></div>
<div class="lbl" style="left:735px;top:376px;">Motorcode:</div>
<div class="inp ph" style="left:812px;top:371px;width:104px;height:20px;"><span>z.B. Z19DTH</span></div>
<div class="lbl" style="left:735px;top:400px;">Art:</div>
<div class="inp" style="left:812px;top:394px;width:104px;height:20px;"><span>Turbo-Diesel</span></div>
<div class="btn" style="left:917px;top:394px;width:20px;height:20px"><svg width="18" height="18" style="position:absolute;left:0;top:0"><path d="M6.5 6.0 L12.5 9.5 L6.5 13.0" fill="none" stroke="#e0e0e0" stroke-width="1"/></svg></div>
<div class="lbl" style="left:735px;top:422px;">Hubraum:</div>
<div class="inp" style="left:812px;top:417px;width:104px;height:20px;"><span>2.0</span></div>
<div class="lbl" style="left:921px;top:423px;">L</div>
<div class="lbl g" style="left:735px;top:446px;">Leistung:</div>
<div class="inp" style="left:812px;top:440px;width:41px;height:20px;text-align:center"><span>140.0</span></div>
<div class="lbl" style="left:855px;top:446px;font-size:11.5px;letter-spacing:0">PS</div>
<div class="inp" style="left:875px;top:440px;width:41px;height:20px;text-align:center"><span>103.0</span></div>
<div class="lbl" style="left:917px;top:446px;font-size:11.5px;letter-spacing:0">kW</div>
<div class="lbl" style="left:735px;top:467px;">Max. Drehmom.</div>
<div class="inp" style="left:812px;top:463px;width:104px;height:20px;"></div>
<div class="lbl" style="left:918px;top:467px;">Nm</div>
<div class="lbl" style="left:735px;top:491px;">Abgasnorm:</div>
<div class="inp ph" style="left:812px;top:486px;width:104px;height:20px;"><span>z.B. Euro 5</span></div>
<div class="btn" style="left:917px;top:486px;width:20px;height:20px"><svg width="18" height="18" style="position:absolute;left:0;top:0"><path d="M6.5 6.0 L12.5 9.5 L6.5 13.0" fill="none" stroke="#e0e0e0" stroke-width="1"/></svg></div>
<div class="lbl" style="left:735px;top:514px;">Getriebe:</div>
<div class="inp ph" style="left:812px;top:509px;width:104px;height:20px;"><span>z.B. Schaltgetriebe</span></div>
<div class="btn" style="left:917px;top:509px;width:20px;height:20px"><svg width="18" height="18" style="position:absolute;left:0;top:0"><path d="M6.5 6.0 L12.5 9.5 L6.5 13.0" fill="none" stroke="#e0e0e0" stroke-width="1"/></svg></div>
<div class="fb" style="left:453px;width:129px;border-color:#1e9be6;text-align:center;line-height:22px;font-size:12px;color:#f0f0f0">OK</div>
<div class="fb" style="left:591px;width:129px;border-color:#c03030;background:#8e1414;text-align:center;line-height:21px;font-size:11px;letter-spacing:-0.24px;color:#f0f0f0;padding-left:1px">Fahrzeugdaten suchen</div>
<div class="fb" style="left:720px;width:24px"></div>
<div class="fb" style="left:752px;width:27px"></div>
<div class="fb" style="left:785px;width:27px"></div>
<div class="fb" style="left:818px;width:27px"></div>
<div class="fb" style="left:845px;width:24px;border-color:#1e7ac8;text-align:center;line-height:24px;font-size:11px;letter-spacing:-0.5px;color:#d8d8d8">&lt;&lt;</div>
<div class="fb" style="left:875px;width:27px;text-align:center;line-height:22px;font-size:11px;color:#d8d8d8">§</div>
<div class="fb" style="left:911px;width:27px"></div>
<div class="fb" style="left:938px;width:12px"></div>
<svg width="240" height="24" viewBox="0 0 240 24" style="position:absolute;left:716px;top:568px">
 <defs><pattern id="dith" width="2" height="2" patternUnits="userSpaceOnUse"><rect width="2" height="2" fill="#b8a838"/><rect width="1" height="1" fill="#e8dc50"/><rect x="1" y="1" width="1" height="1" fill="#e8dc50"/></pattern></defs>
 <rect x="7.5" y="7.5" width="13" height="11" fill="url(#dith)" stroke="#8a8a6a" stroke-width="1"/>
 <path d="M10 8 Q14 4 18 8 Z" fill="#e8e060" stroke="#8a8050" stroke-width="1"/>
 <rect x="13.5" y="11.5" width="8" height="7" fill="#ffffff" stroke="#1a70e0" stroke-width="1"/>
 <rect x="15" y="13.5" width="3" height="1" fill="#1a70e0"/><rect x="15" y="15.5" width="5" height="1" fill="#1a70e0"/>
 <circle cx="49" cy="12" r="7.3" fill="#00e8f0" stroke="#f0f0f0" stroke-width="1.4"/>
 <path d="M43 9 Q44 6 47 5.5 L46 10 Q45 13 43.5 14 Z" fill="#40cc40"/><path d="M51 5.5 Q55 7 56 10 L52 10 Z" fill="#40cc40"/>
 <path d="M50 9 H54 V13 H57 L52 19 L47 13 H50 Z" fill="#3050ff" stroke="#101040" stroke-width="0.8"/>
 <circle cx="82" cy="12" r="7.3" fill="#00e8f0" stroke="#f0f0f0" stroke-width="1.4"/>
 <path d="M76 9 Q77 6 80 5.5 L79 10 Q78 13 76.5 14 Z" fill="#40cc40"/><path d="M84 5.5 Q88 7 89 10 L85 10 Z" fill="#40cc40"/>
 <path d="M85 19 V14 H81 L86 8 L91 14 H88 V19 Z" fill="#f04848" stroke="#301010" stroke-width="0.8"/>
 <path d="M111 6.5 H120 Q122.5 6.5 122.5 9.5 V11 Q122.5 14 120 14 H119.5 L119 17 L116.5 14 H111 Q108.5 14 108.5 11 V9.5 Q108.5 6.5 111 6.5 Z" fill="#ffffff"/>
 <path d="M119.5 14.5 L119 17.3" stroke="#000" stroke-width="0.8"/>
 <path d="M203.5 5.5 H212 L215.5 9 V19.5 H203.5 Z" fill="#f4f4f4" stroke="#b0b0c0" stroke-width="1"/>
 <g fill="#9090a0"><rect x="206" y="9" width="8" height="0.8"/><rect x="206" y="11" width="8" height="0.8"/><rect x="206" y="13" width="8" height="0.8"/><rect x="206" y="15" width="8" height="0.8"/><rect x="206" y="17" width="8" height="0.8"/></g>
 <circle cx="204" cy="13" r="3.4" fill="#5a78b0" stroke="#90b0e0" stroke-width="1.4" stroke-dasharray="1.2 0.9"/>
 <circle cx="204" cy="13" r="1.3" fill="#e8f0ff"/>
 <path d="M227 9.5 H231 L229 12 Z" fill="#f0f0f0"/>
</svg>
</body></html>
